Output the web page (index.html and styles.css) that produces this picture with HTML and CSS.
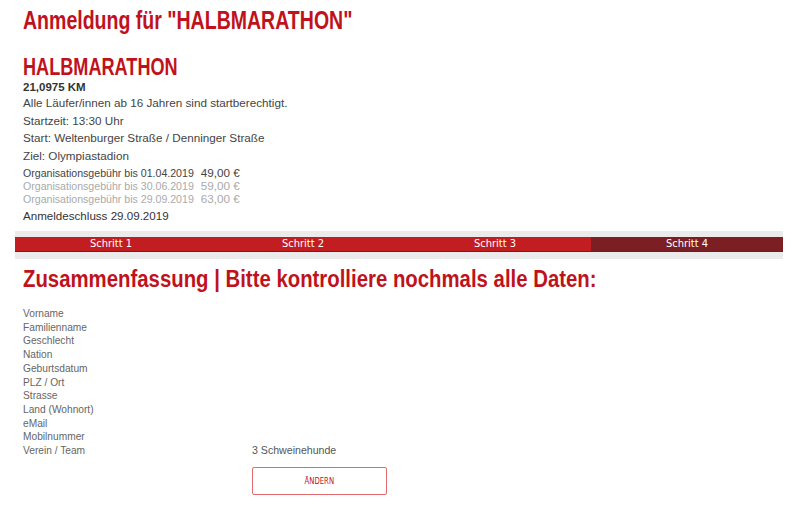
FILE: index.html
```html
<!DOCTYPE html>
<html lang="de">
<head>
<meta charset="utf-8">
<title>Anmeldung</title>
<link rel="stylesheet" href="styles.css">
</head>
<body>
<div class="page">
  <div class="content">
    <h1 class="heading title"><span class="narrow">Anmeldung für "HALBMARATHON"</span></h1>
    <h2 class="heading event"><span class="narrow">HALBMARATHON</span></h2>
    <div class="distance">21,0975 KM</div>
    <p class="info">Alle Läufer/innen ab 16 Jahren sind startberechtigt.</p>
    <p class="info">Startzeit: 13:30 Uhr</p>
    <p class="info">Start: Weltenburger Straße / Denninger Straße</p>
    <p class="info">Ziel: Olympiastadion</p>
    <div class="fees">
      <div class="fee active">Organisationsgebühr bis 01.04.2019<span class="price">49,00 €</span></div>
      <div class="fee">Organisationsgebühr bis 30.06.2019<span class="price">59,00 €</span></div>
      <div class="fee">Organisationsgebühr bis 29.09.2019<span class="price">63,00 €</span></div>
    </div>
    <div class="deadline">Anmeldeschluss 29.09.2019</div>
  </div>
  <div class="steps">
    <div class="steps-bar">
      <div class="step">Schritt 1</div>
      <div class="step">Schritt 2</div>
      <div class="step">Schritt 3</div>
      <div class="step current">Schritt 4</div>
    </div>
  </div>
  <div class="content">
    <h2 class="heading summary"><span class="narrow">Zusammenfassung | Bitte kontrolliere nochmals alle Daten:</span></h2>
    <div class="data">
      <div class="label">Vorname</div><div class="value"></div>
      <div class="label">Familienname</div><div class="value"></div>
      <div class="label">Geschlecht</div><div class="value"></div>
      <div class="label">Nation</div><div class="value"></div>
      <div class="label">Geburtsdatum</div><div class="value"></div>
      <div class="label">PLZ / Ort</div><div class="value"></div>
      <div class="label">Strasse</div><div class="value"></div>
      <div class="label">Land (Wohnort)</div><div class="value"></div>
      <div class="label">eMail</div><div class="value"></div>
      <div class="label">Mobilnummer</div><div class="value"></div>
      <div class="label">Verein / Team</div><div class="value">3 Schweinehunde</div>
      <div class="label"></div><div class="value"><button class="btn"><span class="btn-text">ÄNDERN</span></button></div>
    </div>
  </div>
</div>
</body>
</html>
```
FILE: styles.css
```css
html, body {
  margin: 0;
  padding: 0;
  background: #fff;
}
body {
  font-family: "Liberation Sans", Arial, sans-serif;
  color: #444;
}
.page {
  padding: 0 17px 0 15px;
}
.content {
  padding-left: 8px;
}
.heading {
  font-family: "Liberation Sans", Arial, sans-serif;
  font-weight: bold;
  color: #c0121b;
  white-space: nowrap;
}
.narrow {
  display: inline-block;
  transform-origin: left center;
}
.title {
  margin: 0;
  padding-top: 6px;
  font-size: 26px;
  line-height: 28px;
}
.title .narrow {
  transform: scaleX(0.751);
}
.event {
  margin: 20px 0 0;
  font-size: 24px;
  line-height: 26px;
}
.event .narrow {
  transform: scaleX(0.755);
}
.distance {
  font-size: 11.5px;
  font-weight: bold;
  line-height: 14px;
  color: #333;
  margin-top: 0;
}
.info {
  margin: 0;
  font-size: 11.7px;
  line-height: 17.5px;
  color: #444;
}
.fees {
  margin-top: 3px;
}
.fee {
  font-size: 10.6px;
  line-height: 13px;
  color: #aaa;
}
.fee.active {
  color: #444;
}
.price {
  margin-left: 7px;
  font-size: 11.7px;
  line-height: 10px;
}
.deadline {
  font-size: 11.6px;
  line-height: 17px;
  color: #333;
  margin-top: 1px;
}
.steps {
  margin-top: 7px;
  background: #ebebeb;
  padding: 6px 0 7px;
}
.steps-bar {
  display: grid;
  grid-template-columns: repeat(4, 1fr);
  background: #c21d21;
  border-bottom: 1px solid #a3060c;
}
.step {
  font-family: "DejaVu Sans Condensed", "Liberation Sans", sans-serif;
  color: #fff;
  font-size: 11px;
  text-align: center;
  line-height: 14px;
}
.step.current {
  background: #7b1f25;
}
.summary {
  margin: 8px 0 0;
  font-size: 23px;
  line-height: 24px;
}
.summary .narrow {
  transform: scaleX(0.885);
}
.data {
  margin-top: 16px;
  display: grid;
  grid-template-columns: 229px 1fr;
  font-size: 10.2px;
  line-height: 13.7px;
  color: #666;
}
.value {
  color: #555;
  font-size: 10.6px;
}
.btn {
  margin-top: 9px;
  width: 135px;
  height: 28px;
  background: #fff;
  border: 1px solid #e06a6e;
  border-radius: 2px;
  color: #c0121b;
  padding: 0;
  font-family: "DejaVu Sans Condensed", sans-serif;
  font-size: 9px;
}
.btn-text {
  display: inline-block;
  transform: scaleX(0.85);
}
```
